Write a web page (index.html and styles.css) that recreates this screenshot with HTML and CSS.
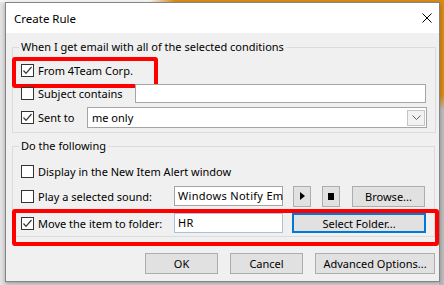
FILE: index.html
```html
<!DOCTYPE html>
<html lang="en">
<head>
    <meta charset="UTF-8">
    <meta name="viewport" content="width=device-width, initial-scale=1.0">
    <title>Create Rule</title>
    <link rel="stylesheet" href="styles.css">
</head>
<body>
    <div class="dialog">
        <div class="titlebar">
            <span class="title">Create Rule</span>
            <svg class="close" width="10" height="10" viewBox="0 0 10 10"><path d="M0.5 0.5L9.5 9.5M9.5 0.5L0.5 9.5" stroke="#000" stroke-width="1" fill="none"/></svg>
        </div>

        <div class="content">
            <fieldset class="group first">
                <legend>When I get email with all of the selected conditions</legend>

                <div class="row mark mark-from">
                    <span class="check"><svg width="11" height="11" viewBox="0 0 11 11"><path d="M1.5 5.5L4 8.3L9.5 2" stroke="#333" stroke-width="1.2" fill="none"/></svg></span>
                    <span class="label">From 4Team Corp.</span>
                </div>

                <div class="row">
                    <span class="check"></span>
                    <span class="label w-subject">Subject contains</span>
                    <span class="textbox subject"></span>
                </div>

                <div class="row tall">
                    <span class="check"><svg width="11" height="11" viewBox="0 0 11 11"><path d="M1.5 5.5L4 8.3L9.5 2" stroke="#333" stroke-width="1.2" fill="none"/></svg></span>
                    <span class="label w-sent">Sent to</span>
                    <span class="select">
                        <span class="value">me only</span>
                        <span class="drop"><svg width="9" height="5" viewBox="0 0 9 5"><path d="M0.5 0.5L4.5 4.5L8.5 0.5" stroke="#606060" stroke-width="1" fill="none"/></svg></span>
                    </span>
                </div>
            </fieldset>

            <fieldset class="group second">
                <legend>Do the following</legend>

                <div class="row">
                    <span class="check"></span>
                    <span class="label">Display in the New Item Alert window</span>
                </div>

                <div class="row sound">
                    <span class="check"></span>
                    <span class="label w-action">Play a selected sound:</span>
                    <span class="textbox file">Windows Notify Em</span>
                    <button class="btn icon play"><svg width="5" height="8" viewBox="0 0 5 8"><path d="M0 0L5 4L0 8Z" fill="#000"/></svg></button>
                    <button class="btn icon stop"><svg width="6" height="7" viewBox="0 0 6 7"><rect width="6" height="7" fill="#000"/></svg></button>
                    <button class="btn browse">Browse...</button>
                </div>

                <div class="row folder mark mark-move">
                    <span class="check"><svg width="11" height="11" viewBox="0 0 11 11"><path d="M1.5 5.5L4 8.3L9.5 2" stroke="#333" stroke-width="1.2" fill="none"/></svg></span>
                    <span class="label w-action">Move the item to folder:</span>
                    <span class="textbox file hr">HR</span>
                    <button class="btn pick">Select Folder...</button>
                </div>
            </fieldset>

            <div class="actions">
                <button class="btn ok">OK</button>
                <button class="btn cancel">Cancel</button>
                <button class="btn advanced">Advanced Options...</button>
            </div>
        </div>
    </div>
</body>
</html>
```

FILE: styles.css
```css
* {
    box-sizing: border-box;
}

body {
    margin: 0;
    height: 285px;
    overflow: hidden;
    padding: 2px 0 0 5px;
    font-family: "Noto Sans", "Segoe UI", sans-serif;
    font-size: 11px;
    color: #000;
    background:
        linear-gradient(to right, #f4f4f4 0, #f4f4f4 150px, #d98b14 175px) top left / 100% 2px no-repeat,
        linear-gradient(#d98b14 0, #d98b14 95px, #bdbdbd 110px) top right / 5px 100% no-repeat,
        #e2e2e2;
}

.dialog {
    width: 435px;
    border: 1px solid #858585;
    box-shadow: 0 2px 4px rgba(0, 0, 0, 0.3);
}

.titlebar {
    height: 30px;
    background: #fff;
    display: flex;
    align-items: center;
    padding: 0 8px;
}

.title {
    font-size: 11.5px;
}

.close {
    margin-left: auto;
    margin-right: -1px;
}

.content {
    background: #f0f0f0;
    padding: 6px 4px 7px 6px;
}

.group {
    margin: 0;
    border: 1px solid #dcdcdc;
    padding: 4px 8px 2px;
}

.group legend {
    line-height: 16px;
    padding: 0 2px;
    margin-left: -2px;
}

.group.second {
    margin-top: 5px;
    padding-top: 6px;
}

.row {
    display: flex;
    align-items: center;
    height: 23px;
    position: relative;
}

.row.tall {
    height: 25px;
}

.row.sound {
    height: 24px;
    margin-top: 2px;
}

.row.folder {
    height: 22px;
    margin-top: 4px;
}

.second .row:first-of-type {
    height: 22px;
}

.check {
    width: 13px;
    height: 13px;
    border: 1px solid #333;
    background: #fff;
    margin-right: 4px;
    flex: none;
    display: flex;
}

.label {
    white-space: nowrap;
    flex: none;
}

.w-subject { width: 97px; }
.w-sent { width: 49px; }
.w-action { width: 136px; }

.textbox {
    height: 19px;
    border: 1px solid #a5a5a5;
    background: #fff;
    padding: 0 3px;
    line-height: 17px;
    white-space: nowrap;
}

.textbox.subject {
    width: 291px;
}

.textbox.file {
    width: 109px;
    height: 20px;
    line-height: 18px;
    letter-spacing: 0.3px;
}

.textbox.hr {
    border-color: #a9c3df;
}

.select {
    width: 340px;
    height: 21px;
    border: 1px solid #a5a5a5;
    background: #fff;
    display: flex;
    align-items: center;
    padding-left: 4px;
}

.drop {
    margin-left: auto;
    margin-right: 1px;
    width: 18px;
    height: 16px;
    border: 1px solid #c4c4c4;
    background: #f2f2f2;
    display: flex;
    align-items: center;
    justify-content: center;
}

.btn {
    font: inherit;
    color: #000;
    height: 21px;
    padding: 0;
    background: #e1e1e1;
    border: 1px solid #adadad;
    border-radius: 0;
}

.btn.icon {
    width: 18px;
    display: flex;
    align-items: center;
    justify-content: center;
}

.btn.play { margin-left: 10px; }
.btn.stop { margin-left: 11px; }

.btn.browse {
    width: 73px;
    margin-left: auto;
    margin-right: 1px;
}

.btn.pick {
    width: 134px;
    height: 20px;
    margin-left: auto;
    border: 2px solid #0078d7;
}

.mark::after {
    content: "";
    position: absolute;
    border: 4px solid #f00;
    border-radius: 3px;
    pointer-events: none;
}

.mark-from::after {
    left: -9px;
    top: -2px;
    width: 138px;
    height: 23px;
}

.mark-move::after {
    left: -9px;
    top: -3px;
    width: 419px;
    height: 29px;
}

.actions {
    display: flex;
    justify-content: flex-end;
    gap: 12px;
    margin-top: 16px;
}

.actions .ok,
.actions .cancel {
    width: 73px;
}

.actions .advanced {
    width: 120px;
}
```
